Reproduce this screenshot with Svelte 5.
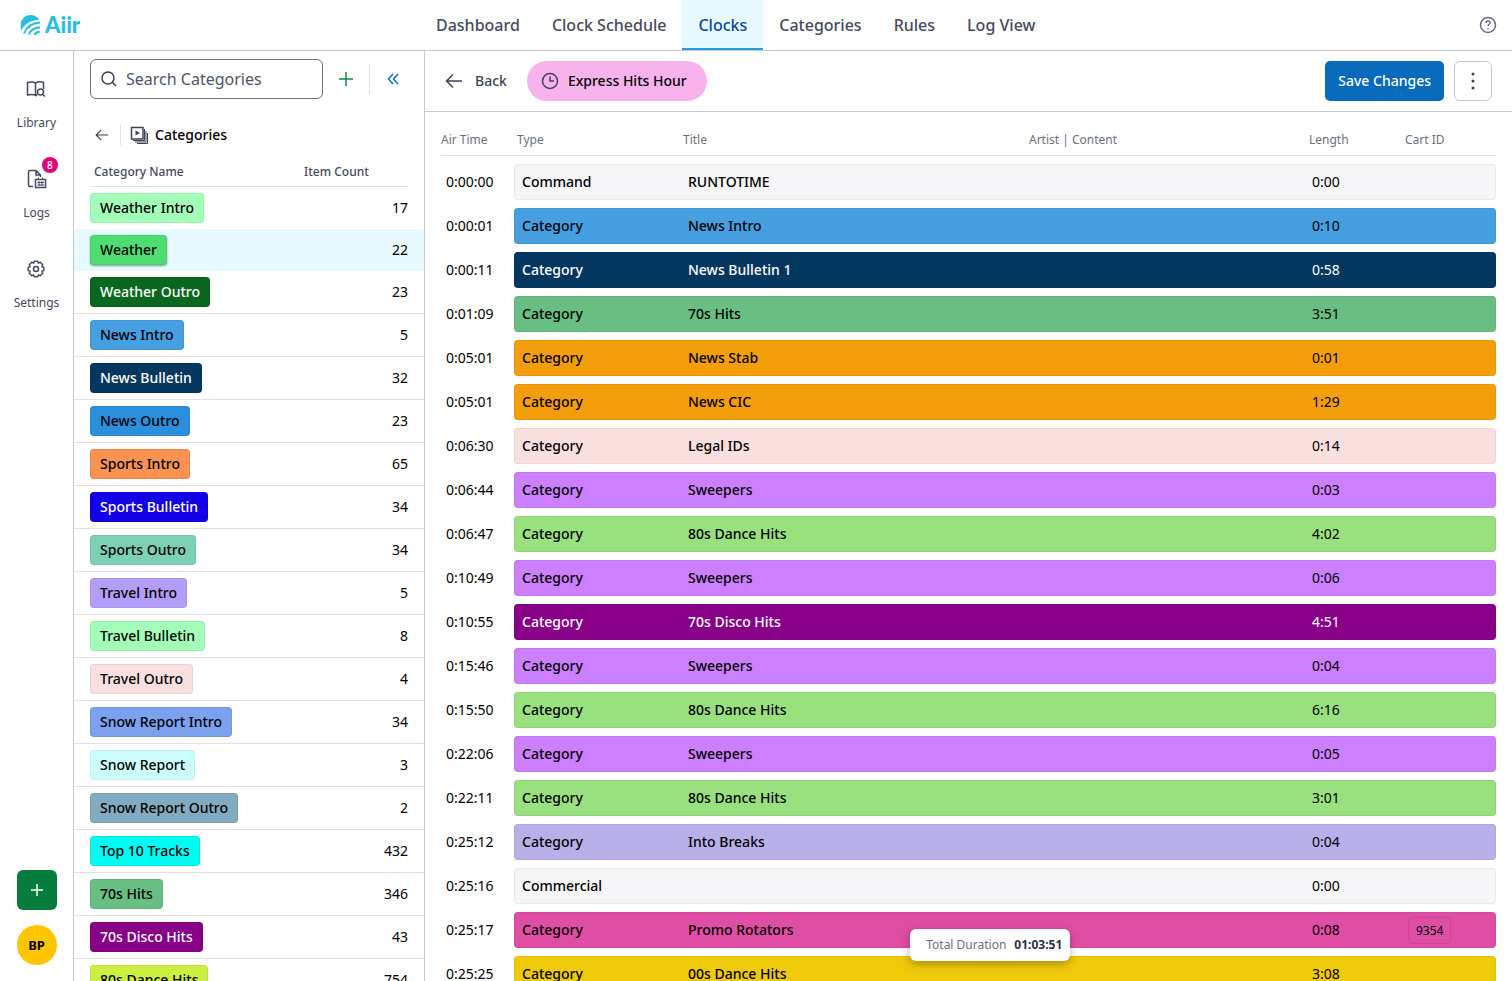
<script lang="ts">
    type Category = { name: string; count: number; color: string; light?: boolean; selected?: boolean };
    type ClockItem = { time: string; type: string; title: string; length: string; color: string; light?: boolean; cart?: string };

    let search = $state('');

    const navigation = ['Dashboard', 'Clock Schedule', 'Clocks', 'Categories', 'Rules', 'Log View'];

    const categories: Category[] = [
        { name: 'Weather Intro', count: 17, color: '#a3ffb8' },
        { name: 'Weather', count: 22, color: '#4edd72', selected: true },
        { name: 'Weather Outro', count: 23, color: '#0a671f', light: true },
        { name: 'News Intro', count: 5, color: '#459fe0' },
        { name: 'News Bulletin', count: 32, color: '#04375f', light: true },
        { name: 'News Outro', count: 23, color: '#2a8fdc' },
        { name: 'Sports Intro', count: 65, color: '#fa9252' },
        { name: 'Sports Bulletin', count: 34, color: '#1400e6', light: true },
        { name: 'Sports Outro', count: 34, color: '#7dd0b3' },
        { name: 'Travel Intro', count: 5, color: '#b39dfa' },
        { name: 'Travel Bulletin', count: 8, color: '#a3ffb8' },
        { name: 'Travel Outro', count: 4, color: '#f9e0df' },
        { name: 'Snow Report Intro', count: 34, color: '#7ba1ef' },
        { name: 'Snow Report', count: 3, color: '#ccfffc' },
        { name: 'Snow Report Outro', count: 2, color: '#83abbf' },
        { name: 'Top 10 Tracks', count: 432, color: '#00fbf2' },
        { name: '70s Hits', count: 346, color: '#69bf81' },
        { name: '70s Disco Hits', count: 43, color: '#880088', light: true },
        { name: '80s Dance Hits', count: 754, color: '#ccf041' }
    ];

    const items: ClockItem[] = [
        { time: '0:00:00', type: 'Command', title: 'RUNTOTIME', length: '0:00', color: '#f6f6f8' },
        { time: '0:00:01', type: 'Category', title: 'News Intro', length: '0:10', color: '#459fe0' },
        { time: '0:00:11', type: 'Category', title: 'News Bulletin 1', length: '0:58', color: '#04375f', light: true },
        { time: '0:01:09', type: 'Category', title: '70s Hits', length: '3:51', color: '#69bf81' },
        { time: '0:05:01', type: 'Category', title: 'News Stab', length: '0:01', color: '#f49e0b' },
        { time: '0:05:01', type: 'Category', title: 'News CIC', length: '1:29', color: '#f49e0b' },
        { time: '0:06:30', type: 'Category', title: 'Legal IDs', length: '0:14', color: '#f9e0df' },
        { time: '0:06:44', type: 'Category', title: 'Sweepers', length: '0:03', color: '#cc80ff' },
        { time: '0:06:47', type: 'Category', title: '80s Dance Hits', length: '4:02', color: '#99e07f' },
        { time: '0:10:49', type: 'Category', title: 'Sweepers', length: '0:06', color: '#cc80ff' },
        { time: '0:10:55', type: 'Category', title: '70s Disco Hits', length: '4:51', color: '#880088', light: true },
        { time: '0:15:46', type: 'Category', title: 'Sweepers', length: '0:04', color: '#cc80ff' },
        { time: '0:15:50', type: 'Category', title: '80s Dance Hits', length: '6:16', color: '#99e07f' },
        { time: '0:22:06', type: 'Category', title: 'Sweepers', length: '0:05', color: '#cc80ff' },
        { time: '0:22:11', type: 'Category', title: '80s Dance Hits', length: '3:01', color: '#99e07f' },
        { time: '0:25:12', type: 'Category', title: 'Into Breaks', length: '0:04', color: '#b8b0e8' },
        { time: '0:25:16', type: 'Commercial', title: '', length: '0:00', color: '#f6f6f8' },
        { time: '0:25:17', type: 'Category', title: 'Promo Rotators', length: '0:08', color: '#df4ea4', cart: '9354' },
        { time: '0:25:25', type: 'Category', title: '00s Dance Hits', length: '3:08', color: '#efca0a' }
    ];
</script>

{#snippet arrow(size: number)}
    <svg width={size} height={size} viewBox="0 0 18 18" aria-hidden="true">
        <path d="M17 9H2M8 2.500 1.500 9 8 15.500" />
    </svg>
{/snippet}

<div class="app">
    <header class="topbar">
        <a class="logo" href="#home" aria-label="Aiir">
            <svg width="21" height="21" viewBox="0 0 21 21" aria-hidden="true">
                <path class="solid" d="M1.500 15.500C-1.500 8 3 0 10.500 0c4 0 7.300 2 8.800 5C11 5 4.500 8.500 1.500 15.500Z" />
                <path d="M4 18.500C6.500 12 11.500 8 20 7.500M9 19.500C10.500 15.500 14 12.800 20 12.300M14.300 20c1-1.900 3-3 5.500-3.200" />
            </svg>
            <span>Aiir</span>
        </a>
        <nav>
            {#each navigation as page}
                <a href="#{page}" class:active={page === 'Clocks'}>{page}</a>
            {/each}
        </nav>
        <button class="help" aria-label="Help">
            <svg width="18" height="18" viewBox="0 0 18 18" aria-hidden="true">
                <circle cx="9" cy="9" r="7.500" />
                <path d="M7 7c0-1.300.9-2 2.100-2s2 .8 2 1.800c0 1.500-2 1.500-2 3.200M9 12v1.300" />
            </svg>
        </button>
    </header>

    <div class="workspace">
        <aside class="rail">
            <a href="#library">
                <svg width="20" height="20" viewBox="0 0 20 20" aria-hidden="true">
                    <path d="M9.500 16.500C8 15.500 4.500 15.500 1.500 16V3.500C5 2.500 8 3 9.500 4v12.500ZM9.500 4c2-1.200 5-1.500 8-.5V10M9.500 16.500l1.800-.8" />
                    <circle cx="14.500" cy="13" r="3" />
                    <path d="m16.700 15.200 2.300 2.300" />
                </svg>
                <span>Library</span>
            </a>
            <a href="#logs">
                <svg width="20" height="20" viewBox="0 0 20 20" aria-hidden="true">
                    <path d="M6 17.500H3.200C2 17.500 1.500 17 1.500 16V3C1.500 2 2 1.500 3 1.500h6l4.500 4.500v2M9 1.500V6h4.500M8.500 10.500h10v8h-10Z" />
                    <path class="grid" d="M10.500 13.500h6.500M10.500 16h6.500M12 12v5M15 12v5M11.500 8.500v2M15.500 8.500v2" />
                </svg>
                <b class="badge">8</b>
                <span>Logs</span>
            </a>
            <a href="#settings">
                <svg width="20" height="20" viewBox="0 0 20 20" aria-hidden="true">
                    <path stroke-linejoin="round" d="M8.400 2.200h3.200l.7 1.900 1.900-.8 2.500 2.500-.8 1.900 1.900.7v3.200l-1.900.7.8 1.900-2.500 2.500-1.900-.8-.7 1.900H8.400l-.7-1.900-1.900.8-2.500-2.500.8-1.900-1.900-.7V8.400l1.900-.7-.8-1.900 2.500-2.500 1.900.8Z" />
                    <circle cx="10" cy="10" r="2.500" />
                </svg>
                <span>Settings</span>
            </a>
            <button class="create" aria-label="Create">
                <svg width="16" height="16" viewBox="0 0 16 16" aria-hidden="true"><path d="M8 2v12M2 8h12" /></svg>
            </button>
            <button class="avatar">BP</button>
        </aside>

        <section class="library">
            <div class="search-row">
                <label class="search">
                    <svg width="18" height="18" viewBox="0 0 18 18" aria-hidden="true">
                        <circle cx="8" cy="8" r="6" />
                        <path d="m12.300 12.300 3.700 3.700" />
                    </svg>
                    <input bind:value={search} placeholder="Search Categories" aria-label="Search Categories" />
                </label>
                <button class="add" aria-label="Add category">
                    <svg width="16" height="16" viewBox="0 0 16 16" aria-hidden="true"><path d="M8 1v14M1 8h14" /></svg>
                </button>
                <button class="collapse" aria-label="Collapse panel">
                    <svg width="12" height="12" viewBox="0 0 12 12" aria-hidden="true"><path d="M6 1 1.500 6 6 11M11 1 6.500 6l4.500 5" /></svg>
                </button>
            </div>
            <div class="panel-title">
                <button aria-label="Back to library">{@render arrow(14)}</button>
                <h2>
                    <svg width="18" height="18" viewBox="0 0 18 18" aria-hidden="true">
                        <rect x="1.500" y="1.500" width="11.500" height="11.500" />
                        <path class="solid" d="M5.500 4.500v5L10 7Z" />
                        <path class="grid" d="M14.500 3v11.500H3M16 5v11H5M17.500 7v10.500H7" />
                    </svg>
                    Categories
                </h2>
            </div>
            <table class="categories">
                <thead>
                    <tr>
                        <th>Category Name</th>
                        <th>Item Count</th>
                    </tr>
                </thead>
                <tbody>
                    {#each categories as category}
                        <tr class:selected={category.selected}>
                            <td>
                                <span class="tag" class:light={category.light} style:background-color={category.color}>{category.name}</span>
                            </td>
                            <td>{category.count}</td>
                        </tr>
                    {/each}
                </tbody>
            </table>
        </section>

        <main>
            <div class="toolbar">
                <button class="back">{@render arrow(18)} Back</button>
                <div class="clock-name">
                    <svg width="18" height="18" viewBox="0 0 18 18" aria-hidden="true">
                        <circle cx="9" cy="9" r="7.500" />
                        <path d="M9 4.500V9h4" />
                    </svg>
                    Express Hits Hour
                </div>
                <button class="save">Save Changes</button>
                <button class="more" aria-label="More options">
                    <svg width="20" height="20" viewBox="0 0 20 20" aria-hidden="true">
                        <circle class="solid" cx="10" cy="3" r="1.500" />
                        <circle class="solid" cx="10" cy="10" r="1.500" />
                        <circle class="solid" cx="10" cy="17" r="1.500" />
                    </svg>
                </button>
            </div>

            <table class="clock">
                <thead>
                    <tr>
                        <th class="time">Air Time</th>
                        <th class="type">Type</th>
                        <th class="title">Title</th>
                        <th class="artist">Artist | Content</th>
                        <th class="length">Length</th>
                        <th class="cart">Cart ID</th>
                    </tr>
                </thead>
                <tbody>
                    {#each items as item}
                        <tr class:light={item.light} style:--row-color={item.color}>
                            <td>{item.time}</td>
                            <td>{item.type}</td>
                            <td>{item.title}</td>
                            <td></td>
                            <td>{item.length}</td>
                            <td>{#if item.cart}<span class="cart-id">{item.cart}</span>{/if}</td>
                        </tr>
                    {/each}
                </tbody>
            </table>

            <div class="duration">Total Duration <strong>01:03:51</strong></div>
        </main>
    </div>
</div>

<style>
    :global(body) {
        margin: 0;
        overflow: hidden;
    }

    .app {
        display: flex;
        flex-direction: column;
        height: 100vh;
        overflow: hidden;
        font-family: "Noto Sans", "Open Sans", sans-serif;
        font-size: 14px;
        line-height: 20px;
        color: #000;
        background: #fff;
    }

    .app * {
        box-sizing: border-box;
    }

    svg {
        flex: none;
        fill: none;
        stroke: currentColor;
        stroke-width: 1.5;
    }

    .solid {
        fill: currentColor;
        stroke: none;
    }

    .grid {
        stroke-width: 1;
    }

    a {
        color: inherit;
        text-decoration: none;
    }

    button {
        display: flex;
        align-items: center;
        justify-content: center;
        padding: 0;
        border: none;
        background: none;
        font: inherit;
        color: #3c4257;
        cursor: pointer;
    }

    .topbar {
        display: flex;
        flex: none;
        height: 51px;
        padding: 0 15px 0 20px;
        border-bottom: 1px solid #c8c9ce;
    }

    .logo {
        display: flex;
        align-items: center;
        gap: 4px;
        width: 400px;
        color: #25bfdf;
        font-family: "Lato", sans-serif;
        font-size: 22px;
        font-weight: 900;
    }

    .logo svg {
        stroke-width: 2;
    }

    nav {
        display: flex;
    }

    nav a {
        display: flex;
        align-items: center;
        padding: 2px 16px 0;
        font-size: 16px;
        font-weight: 500;
        color: #454a60;
        border-bottom: 2px solid transparent;
    }

    nav a.active {
        color: #07479c;
        background: #e6faff;
        border-color: #2a9de2;
    }

    .help {
        margin-left: auto;
        color: #666b7f;
    }

    .workspace {
        display: flex;
        flex: 1;
        min-height: 0;
    }

    .rail {
        display: flex;
        flex-direction: column;
        align-items: center;
        flex: none;
        width: 74px;
        padding: 28px 0 16px;
        border-right: 1px solid #c8c9ce;
        font-size: 12px;
        color: #454a60;
    }

    .rail a {
        position: relative;
        display: flex;
        flex-direction: column;
        align-items: center;
        gap: 14px;
        height: 90px;
    }

    .badge {
        position: absolute;
        top: -12px;
        right: -8px;
        width: 16px;
        border-radius: 50%;
        background: #e0007a;
        color: #fff;
        font-size: 10px;
        font-weight: 500;
        line-height: 16px;
        text-align: center;
    }

    .create,
    .avatar {
        width: 40px;
        height: 40px;
    }

    .create {
        margin-top: auto;
        border-radius: 6px;
        background: #067d3c;
        color: #fff;
    }

    .avatar {
        margin-top: 15px;
        border-radius: 50%;
        background: #ffc600;
        color: #000;
        font-size: 13px;
        font-weight: 700;
    }

    .library {
        flex: none;
        width: 351px;
        border-right: 1px solid #c8c9ce;
        overflow: hidden;
    }

    .search-row {
        display: flex;
        align-items: center;
        padding: 8px 8px 8px 16px;
    }

    .search {
        display: flex;
        align-items: center;
        gap: 8px;
        width: 233px;
        height: 40px;
        padding: 0 9px;
        border: 1px solid #6b7082;
        border-radius: 6px;
        color: #3c4257;
    }

    .search input {
        flex: 1;
        min-width: 0;
        padding: 0;
        border: none;
        outline: none;
        background: none;
        font: inherit;
        font-size: 16px;
        color: inherit;
    }

    .search input::placeholder {
        color: #50556a;
        opacity: 1;
    }

    .add,
    .collapse {
        width: 46px;
        height: 30px;
    }

    .add {
        color: #16894a;
    }

    .collapse {
        border-left: 1px solid #e1e2e6;
        color: #0b6bcb;
    }

    .panel-title {
        display: flex;
        align-items: center;
        height: 32px;
        margin: 12px 16px 0;
    }

    .panel-title button {
        width: 31px;
        height: 20px;
        padding-right: 7px;
        border-right: 1px solid #e1e2e6;
    }

    .panel-title h2 {
        display: flex;
        align-items: center;
        gap: 7px;
        margin: 0 0 0 9px;
        font-size: 14px;
        font-weight: 500;
    }

    .panel-title svg {
        color: #3c4257;
    }

    table {
        width: 100%;
        border-collapse: separate;
        border-spacing: 0;
    }

    th {
        text-align: left;
        color: #6b7082;
        font-weight: 400;
        font-size: 12px;
    }

    td {
        padding: 0;
    }

    .categories th {
        height: 36px;
        padding: 5px 0 0;
        color: #454a60;
        font-size: 12px;
        font-weight: 500;
    }

    /* the header rule stops short of the panel edges */
    .categories thead {
        background: linear-gradient(#e1e2e6, #e1e2e6) bottom / calc(100% - 32px) 1px no-repeat;
    }

    .categories th:first-child {
        padding-left: 20px;
    }

    .categories th:last-child {
        width: 120px;
    }

    .categories td {
        height: 43px;
        border-bottom: 1px solid #e1e2e6;
    }

    .categories td:first-child {
        padding-left: 16px;
    }

    .categories td:last-child {
        padding-right: 16px;
        text-align: right;
    }

    .categories tr:nth-child(-n + 2) td {
        height: 42px;
        border-bottom: none;
    }

    .selected {
        background: #e6faff;
    }

    .tag {
        display: inline-block;
        padding: 4px 9px;
        border: 1px solid rgba(0, 0, 0, 0.06);
        border-radius: 4px;
        font-weight: 500;
    }

    .selected .tag {
        box-shadow: 0 1px 2px rgba(0, 0, 0, 0.4);
    }

    .tag.light {
        color: #fff;
    }

    main {
        position: relative;
        flex: 1;
        min-width: 0;
        overflow: hidden;
    }

    .toolbar {
        display: flex;
        align-items: center;
        height: 61px;
        padding: 0 20px;
        border-bottom: 1px solid #c8c9ce;
        font-weight: 500;
    }

    .back {
        gap: 12px;
        font-weight: 500;
    }

    .clock-name {
        display: flex;
        align-items: center;
        gap: 9px;
        height: 40px;
        margin-left: 20px;
        padding: 0 20px 0 14px;
        border-radius: 20px;
        background: #f8b2ec;
    }

    .clock-name svg {
        color: #3c4257;
    }

    .save {
        height: 40px;
        margin-left: auto;
        padding: 0 13px;
        border-radius: 5px;
        background: #076abb;
        color: #fff;
        font-weight: 500;
    }

    .more {
        width: 38px;
        height: 40px;
        margin-left: 10px;
        border: 1px solid #c8c9ce;
        border-radius: 6px;
    }

    .clock {
        width: calc(100% - 32px);
        margin: 10px 16px 0;
        table-layout: fixed;
        border-spacing: 0 8px;
    }

    .clock thead th {
        height: 24px;
        padding: 0 0 5px;
        border-bottom: 1px solid #e1e2e6;
    }

    .time {
        width: 73px;
    }

    .type {
        width: 166px;
    }

    .title {
        width: 346px;
    }

    .length {
        width: 96px;
    }

    .cart {
        width: 91px;
    }

    .clock thead .type,
    .clock thead .title,
    .clock thead .artist {
        padding-left: 3px;
    }

    .clock td {
        height: 36px;
        padding-left: 3px;
        border: 1px solid rgba(0, 0, 0, 0.05);
        border-width: 1px 0;
        background: var(--row-color);
    }

    .clock td:first-child {
        padding-left: 5px;
        border: none;
        background: none;
    }

    .clock td:nth-child(2) {
        padding-left: 7px;
        border-left-width: 1px;
        border-radius: 4px 0 0 4px;
    }

    .clock td:nth-child(3) {
        padding-left: 8px;
    }

    .clock td:last-child {
        border-right-width: 1px;
        border-radius: 0 4px 4px 0;
    }

    .clock td:nth-child(2),
    .clock td:nth-child(3) {
        font-weight: 500;
    }

    .clock .light td:not(:first-child) {
        color: #fff;
    }

    .cart-id {
        padding: 4px 7px;
        border: 1px solid rgba(0, 0, 0, 0.08);
        border-radius: 4px;
        font-size: 12px;
    }

    .duration {
        position: absolute;
        bottom: 20px;
        left: 52%;
        display: flex;
        align-items: center;
        gap: 8px;
        height: 32px;
        padding: 0 8px 0 16px;
        border-radius: 6px;
        background: #fff;
        box-shadow: 0 3px 10px rgba(0, 0, 0, 0.3);
        color: #6b7082;
        font-size: 12px;
        transform: translateX(-50%);
        white-space: nowrap;
    }

    .duration strong {
        color: #2b3048;
    }
</style>
